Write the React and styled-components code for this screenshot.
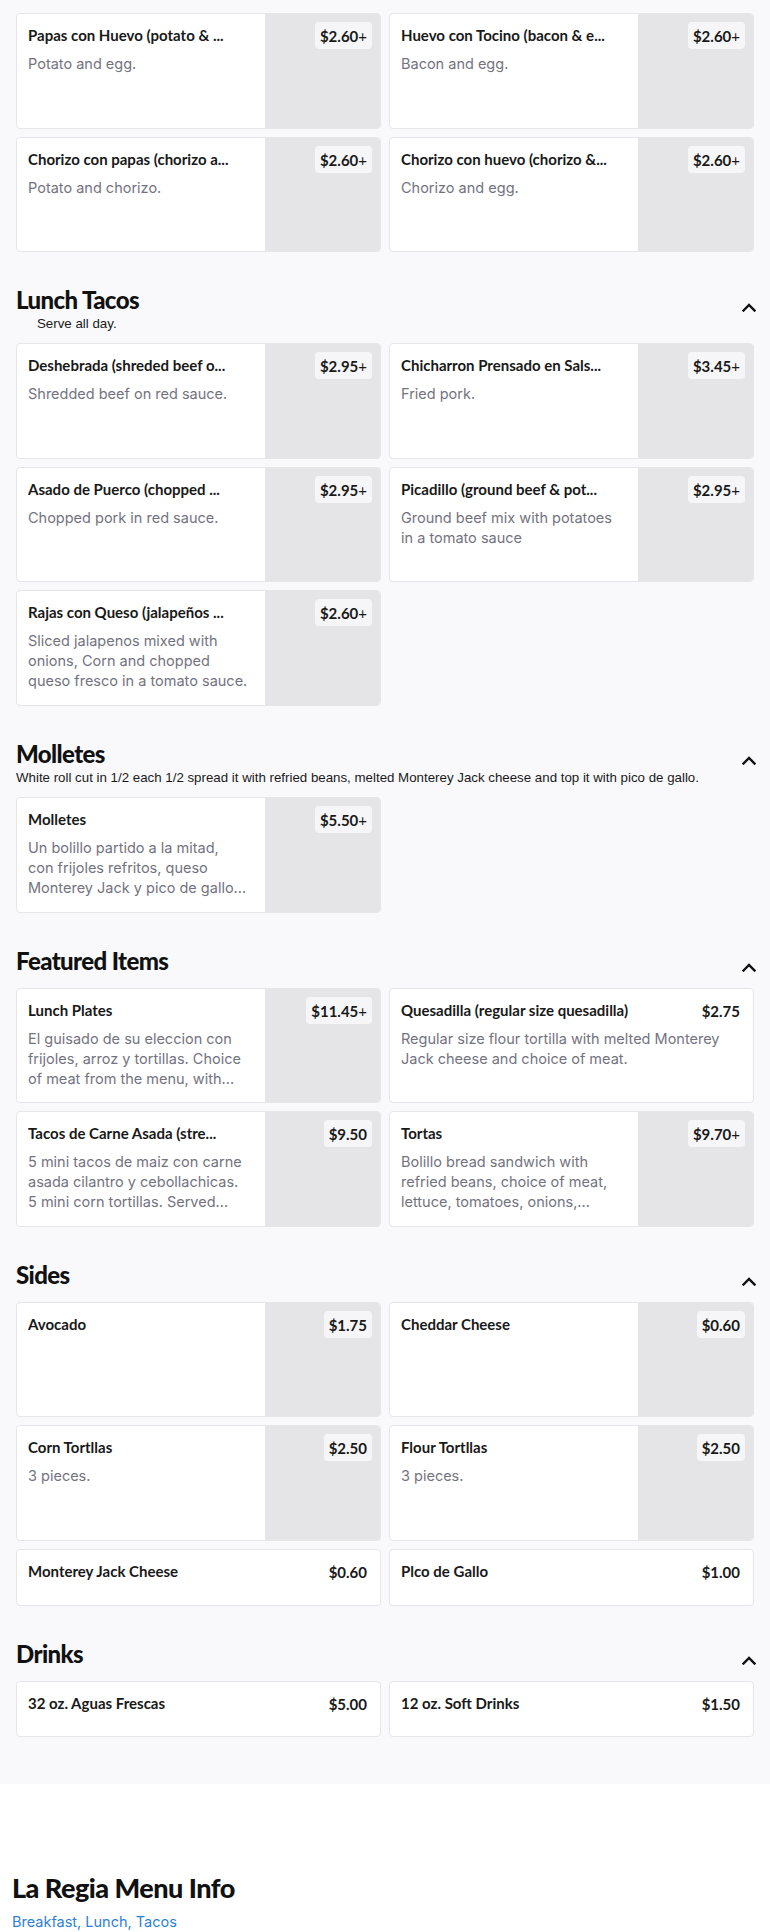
import React from "react";
import styled, { createGlobalStyle } from "styled-components";

const GlobalStyle = createGlobalStyle`
  body {
    margin: 0;
    background: #ffffff;
    font-family: "Inter", "Liberation Sans", sans-serif;
    color: #191919;
  }
  * {
    box-sizing: border-box;
  }
`;

const MenuArea = styled.div`
  background: #f9f9fb;
  padding: 13px 16px 47px;
`;

const Section = styled.section`
  & + & {
    margin-top: 32px;
  }
`;

const HeaderRow = styled.div`
  display: flex;
  align-items: center;
  justify-content: space-between;
  height: 32px;
`;

const SectionTitle = styled.h2`
  margin: 0;
  font-family: "Lato", "Liberation Sans", sans-serif;
  font-weight: 900;
  font-size: 24px;
  line-height: 32px;
  letter-spacing: -0.6px;
  color: #111111;
`;

const Toggle = styled.button`
  display: flex;
  align-items: center;
  justify-content: center;
  border: none;
  background: transparent;
  padding: 0;
  margin-right: -2px;
  margin-top: 14px;
  cursor: pointer;
`;

const SectionNote = styled.p`
  margin: 0;
  padding-left: ${({ $indent }) => ($indent ? "21px" : "0")};
  font-family: "Liberation Sans", Arial, sans-serif;
  font-size: 13.3px;
  line-height: 16px;
  color: #1a1a1a;
`;

const Grid = styled.div`
  display: grid;
  grid-template-columns: 1fr 1fr;
  gap: 8px;
  margin-top: ${({ $flush }) => ($flush ? "0" : "11px")};
`;

const Card = styled.div`
  position: relative;
  display: flex;
  min-height: ${({ $image }) => ($image ? "115.6px" : "56.6px")};
  background: #ffffff;
  border: 1px solid #e6e6ea;
  border-radius: 4px;
  overflow: hidden;
`;

const CardBody = styled.div`
  flex: 1;
  min-width: 0;
  padding: 11px 12px 12px 11px;
`;

const ItemName = styled.div`
  font-family: "Lato", "Liberation Sans", sans-serif;
  font-weight: 700;
  font-size: 15px;
  line-height: 20px;
  color: #191919;
  white-space: nowrap;
  overflow: hidden;
  padding-right: ${({ $image }) => ($image ? "0" : "64px")};
`;

const ItemDesc = styled.div`
  margin-top: 9px;
  max-width: ${({ $image }) => ($image ? "219.7px" : "none")};
  font-family: "Inter", "Liberation Sans", sans-serif;
  font-size: 14.5px;
  line-height: 20px;
  color: #737380;
  display: -webkit-box;
  -webkit-line-clamp: 3;
  -webkit-box-orient: vertical;
  overflow: hidden;
`;

const Media = styled.div`
  flex: 0 0 115px;
  background: #e5e5e8;
`;

const Price = styled.div`
  position: absolute;
  top: 8px;
  right: 8px;
  padding: 4px 5px 3px;
  border-radius: 4px;
  background: ${({ $image }) => ($image ? "#f6f6f8" : "transparent")};
  font-family: "Lato", "Liberation Sans", sans-serif;
  font-weight: 700;
  font-size: 15px;
  line-height: 20px;
  color: #191919;
`;

const Plus = styled.span`
  font-weight: 400;
`;

const InfoArea = styled.div`
  padding: 87px 12px 20px;
  background: #ffffff;
`;

const InfoTitle = styled.h2`
  margin: 0;
  font-family: "Lato", "Liberation Sans", sans-serif;
  font-weight: 900;
  font-size: 27px;
  line-height: 34px;
  letter-spacing: -0.5px;
  color: #111111;
`;

const InfoLinks = styled.div`
  margin-top: 7px;
  font-family: "Inter", "Liberation Sans", sans-serif;
  font-size: 14.5px;
  line-height: 20px;
  color: #2f7fd6;
`;

function Chevron() {
  return (
    <svg width="14" height="9" viewBox="0 0 14 9" fill="none">
      <polyline
        points="1.5,7.5 7,2 12.5,7.5"
        stroke="#111"
        strokeWidth="2.4"
        strokeLinecap="square"
        strokeLinejoin="miter"
      />
    </svg>
  );
}

const sections = [
  {
    items: [
      { name: "Papas con Huevo (potato & ...", desc: "Potato and egg.", price: "$2.60", plus: true, image: true },
      { name: "Huevo con Tocino (bacon & e...", desc: "Bacon and egg.", price: "$2.60", plus: true, image: true },
      { name: "Chorizo con papas (chorizo a...", desc: "Potato and chorizo.", price: "$2.60", plus: true, image: true },
      { name: "Chorizo con huevo (chorizo &...", desc: "Chorizo and egg.", price: "$2.60", plus: true, image: true },
    ],
  },
  {
    title: "Lunch Tacos",
    note: "Serve all day.",
    indent: true,
    items: [
      { name: "Deshebrada (shreded beef o...", desc: "Shredded beef on red sauce.", price: "$2.95", plus: true, image: true },
      { name: "Chicharron Prensado en Sals...", desc: "Fried pork.", price: "$3.45", plus: true, image: true },
      { name: "Asado de Puerco (chopped ...", desc: "Chopped pork in red sauce.", price: "$2.95", plus: true, image: true },
      { name: "Picadillo (ground beef & pot...", desc: "Ground beef mix with potatoes in a tomato sauce", price: "$2.95", plus: true, image: true },
      { name: "Rajas con Queso (jalapeños ...", desc: "Sliced jalapenos mixed with onions, Corn and chopped queso fresco in a tomato sauce.", price: "$2.60", plus: true, image: true },
    ],
  },
  {
    title: "Molletes",
    note: "White roll cut in 1/2 each 1/2 spread it with refried beans, melted Monterey Jack cheese and top it with pico de gallo.",
    items: [
      { name: "Molletes", desc: "Un bolillo partido a la mitad, con frijoles refritos, queso Monterey Jack y pico de gallo...", price: "$5.50", plus: true, image: true },
    ],
  },
  {
    title: "Featured Items",
    items: [
      { name: "Lunch Plates", desc: "El guisado de su eleccion con frijoles, arroz y tortillas. Choice of meat from the menu, with...", price: "$11.45", plus: true, image: true },
      { name: "Quesadilla (regular size quesadilla)", desc: "Regular size flour tortilla with melted Monterey Jack cheese and choice of meat.", price: "$2.75" },
      { name: "Tacos de Carne Asada (stre...", desc: "5 mini tacos de maiz con carne asada cilantro y cebollachicas. 5 mini corn tortillas. Served...", price: "$9.50", image: true },
      { name: "Tortas", desc: "Bolillo bread sandwich with refried beans, choice of meat, lettuce, tomatoes, onions,...", price: "$9.70", plus: true, image: true },
    ],
  },
  {
    title: "Sides",
    items: [
      { name: "Avocado", price: "$1.75", image: true },
      { name: "Cheddar Cheese", price: "$0.60", image: true },
      { name: "Corn Tortllas", desc: "3 pieces.", price: "$2.50", image: true },
      { name: "Flour Tortllas", desc: "3 pieces.", price: "$2.50", image: true },
      { name: "Monterey Jack Cheese", price: "$0.60" },
      { name: "Plco de Gallo", price: "$1.00" },
    ],
  },
  {
    title: "Drinks",
    items: [
      { name: "32 oz. Aguas Frescas", price: "$5.00" },
      { name: "12 oz. Soft Drinks", price: "$1.50" },
    ],
  },
];

function MenuItem({ item }) {
  return (
    <Card $image={item.image}>
      <CardBody>
        <ItemName $image={item.image}>{item.name}</ItemName>
        {item.desc && <ItemDesc $image={item.image}>{item.desc}</ItemDesc>}
      </CardBody>
      {item.image && <Media />}
      <Price $image={item.image}>
        {item.price}
        {item.plus && <Plus>+</Plus>}
      </Price>
    </Card>
  );
}

export default function App() {
  return (
    <>
      <GlobalStyle />
      <MenuArea>
        {sections.map((section, i) => (
          <Section key={i}>
            {section.title && (
              <HeaderRow>
                <SectionTitle>{section.title}</SectionTitle>
                <Toggle aria-label="Collapse">
                  <Chevron />
                </Toggle>
              </HeaderRow>
            )}
            {section.note && <SectionNote $indent={section.indent}>{section.note}</SectionNote>}
            <Grid $flush={!section.title}>
              {section.items.map((item, j) => (
                <MenuItem key={j} item={item} />
              ))}
            </Grid>
          </Section>
        ))}
      </MenuArea>
      <InfoArea>
        <InfoTitle>La Regia Menu Info</InfoTitle>
        <InfoLinks>Breakfast, Lunch, Tacos</InfoLinks>
      </InfoArea>
    </>
  );
}
